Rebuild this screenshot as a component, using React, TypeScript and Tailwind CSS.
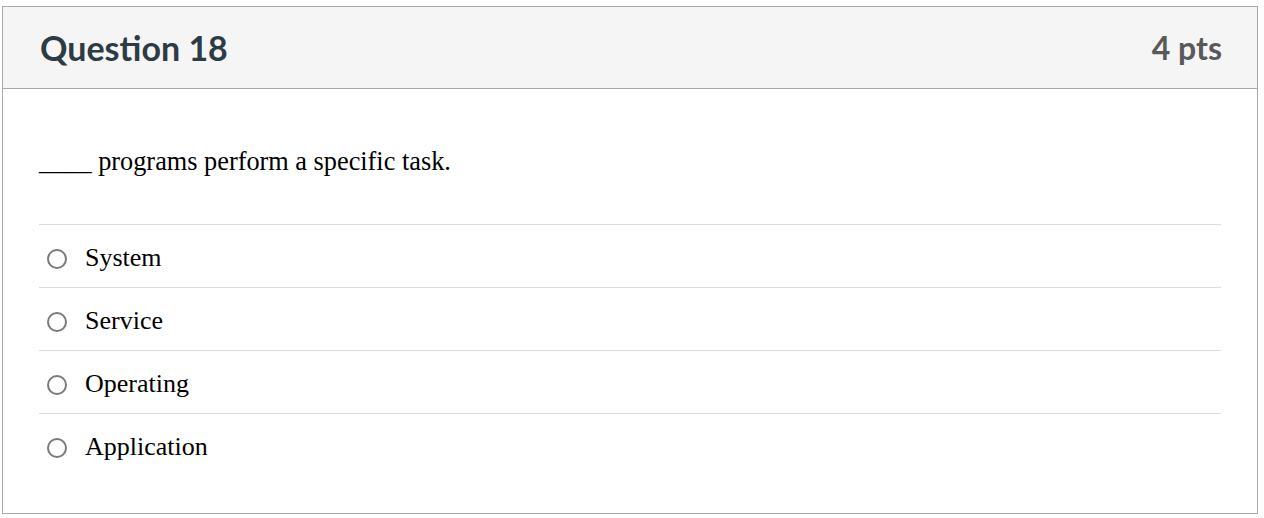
const options = ["System", "Service", "Operating", "Application"];

export default function App() {
  return (
    <div className="w-[1264px] h-[518px] bg-white pt-[6px] pl-[2px]">
      <div className="w-[1256px] h-[508px] border border-[#a8a8a8] flex flex-col">
        <div className="h-[82px] shrink-0 bg-[#f5f5f5] border-b border-[#a8a8a8] flex items-center justify-between pl-[37px] pr-[35px] font-['Lato',sans-serif] font-bold">
          <h2 className="text-[34px] text-[#2d3b45] leading-none">Question 18</h2>
          <div className="text-[32px] text-[#595959] leading-none">4 pts</div>
        </div>
        <div className="px-[36px] pt-[55px] font-['Liberation_Serif',serif] text-black">
          <p className="text-[26.3px] leading-[36px]">____ programs perform a specific task.</p>
          <div className="mt-[44px]">
            {options.map((o) => (
              <label
                key={o}
                className="h-[63px] border-t border-[#dcdcdc] flex items-center gap-[18px] pl-[8px]"
              >
                <span className="w-[20px] h-[20px] mt-[5px] rounded-full border-2 border-[#7a7a7a] bg-white shrink-0" />
                <span className="text-[26px] leading-[36px] mt-[4px]">{o}</span>
              </label>
            ))}
          </div>
        </div>
      </div>
    </div>
  );
}
